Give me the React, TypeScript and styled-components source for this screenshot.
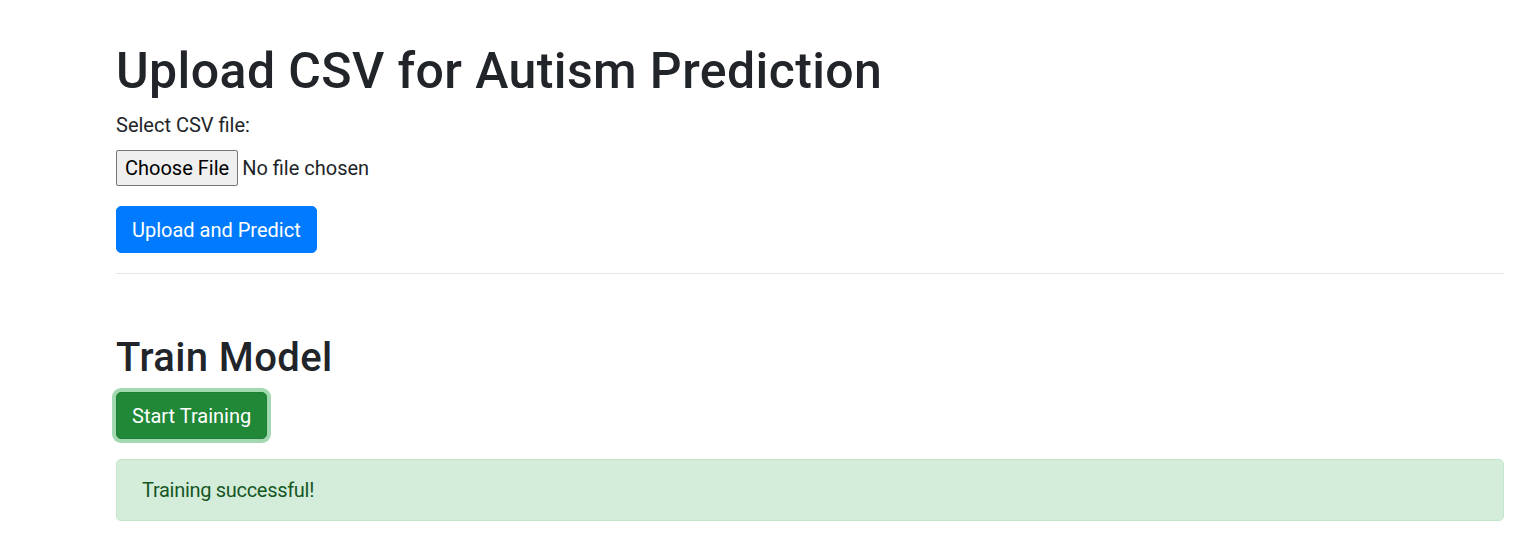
import styled, {createGlobalStyle} from 'styled-components'

const GlobalStyle = createGlobalStyle`
    html, body {
        margin: 0;
        padding: 0;
        background: #fff;
    }
    body {
        font-family: Roboto, "Liberation Sans", sans-serif;
        font-size: 20px;
        line-height: 1.5;
        color: #212529;
    }
    * {
        box-sizing: border-box;
    }
`

// Upload + train page, bootstrap 4 look at 125% scale
const App = () => {
    return (
        <>
            <GlobalStyle />
            <Container>
                <PageTitle>Upload CSV for Autism Prediction</PageTitle>
                <form onSubmit={(e) => e.preventDefault()}>
                    <FormGroup>
                        <Label htmlFor="csvFile">Select CSV file:</Label>
                        <FileInput type="file" id="csvFile" accept=".csv" />
                    </FormGroup>
                    <Button type="submit" $variant="primary">
                        Upload and Predict
                    </Button>
                </form>
                <Divider />
                <Section>
                    <SectionTitle>Train Model</SectionTitle>
                    <Button type="button" $variant="success" $focused>
                        Start Training
                    </Button>
                    <Alert role="alert">Training successful!</Alert>
                </Section>
            </Container>
        </>
    )
}

export default App

const Container = styled.div`
    width: 1388px;
    margin-left: 116px;
    padding-top: 41px;
`

const PageTitle = styled.h1`
    margin: 0 0 9px;
    font-size: 50px;
    font-weight: 500;
    line-height: 60px;
    letter-spacing: 0.4px;
`

const FormGroup = styled.div`
    margin-bottom: 20px;
`

const Label = styled.label`
    display: inline-block;
    margin-bottom: 10px;
    line-height: 30px;
`

const FileInput = styled.input`
    display: block;
    width: 100%;
    height: 36px;
    font: inherit;
    font-size: 20px;
    color: #212529;

    &::file-selector-button {
        height: 36px;
        margin-right: 4px;
        padding: 0 8px;
        font: inherit;
        color: #000;
        background-color: #efefef;
        border: 1px solid #767676;
        border-radius: 2px;
    }
`

const variants = {
    primary: {bg: '#007bff', border: '#007bff', shadow: 'rgba(38, 143, 255, 0.5)'},
    success: {bg: '#218838', border: '#1e7e34', shadow: 'rgba(72, 180, 97, 0.5)'},
}

const Button = styled.button<{$variant: 'primary' | 'success'; $focused?: boolean}>`
    display: inline-block;
    padding: 7.5px 15px;
    font-family: inherit;
    font-size: 20px;
    font-weight: 400;
    line-height: 30px;
    color: #fff;
    background-color: ${(p) => variants[p.$variant].bg};
    border: 1px solid ${(p) => variants[p.$variant].border};
    border-radius: 5px;
    cursor: pointer;
    box-shadow: ${(p) => (p.$focused ? `0 0 0 4px ${variants[p.$variant].shadow}` : 'none')};
    outline: none;
`

const Divider = styled.hr`
    margin: 20px 0;
    border: 0;
    border-top: 1px solid rgba(0, 0, 0, 0.1);
`

const Section = styled.div`
    margin-top: 60px;
`

const SectionTitle = styled.h2`
    margin: 0 0 10px;
    font-size: 40px;
    font-weight: 500;
    line-height: 48px;
    letter-spacing: 0.4px;
`

const Alert = styled.div`
    margin-top: 20px;
    padding: 15px 25px;
    color: #155724;
    background-color: #d4edda;
    border: 1px solid #c3e6cb;
    border-radius: 5px;
    line-height: 30px;
    letter-spacing: -0.3px;
`
